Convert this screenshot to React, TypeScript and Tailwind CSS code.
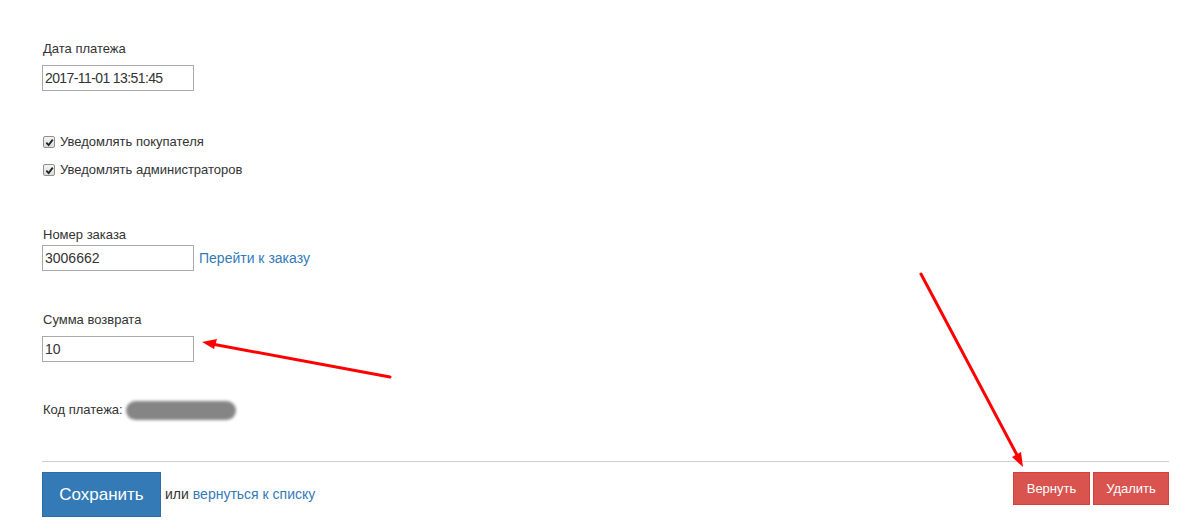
import React from "react";

const CheckMark: React.FC = () => (
  <span className="inline-flex items-center justify-center w-[12px] h-[12px] border border-[#8f8f8f] rounded-[2px] bg-gradient-to-b from-[#f4f4f4] to-[#dcdcdc]">
    <svg width="9" height="9" viewBox="0 0 10 10">
      <path d="M1.5 5.2 L4 7.8 L8.6 1.8" fill="none" stroke="#222" strokeWidth="2" />
    </svg>
  </span>
);

const Field: React.FC<{ value: string; tight?: boolean }> = ({ value, tight }) => (
  <input
    readOnly
    value={value}
    className={
      tight
        ? "block h-[26px] w-[152px] border border-[#a9a9a9] px-[2px] text-[14px] tracking-[-0.6px] text-[#333] outline-none bg-white"
        : "block h-[26px] w-[152px] border border-[#a9a9a9] px-[2px] text-[14px] text-[#333] outline-none bg-white"
    }
  />
);

export default function App() {
  return (
    <div className="relative w-[1200px] h-[532px] bg-white overflow-hidden font-['Liberation_Sans',Arial,sans-serif] text-[13px] text-[#333]">
      <div className="pt-[40px] pl-[42px] pr-[31px]">
        <div className="leading-[18px] pl-px">Дата платежа</div>
        <div className="mt-[7px]">
          <Field value="2017-11-01 13:51:45" tight />
        </div>

        <div className="mt-[41px] flex flex-col gap-[8px] pl-px">
          <label className="flex items-center gap-[5px] h-[20px]">
            <CheckMark />
            <span>Уведомлять покупателя</span>
          </label>
          <label className="flex items-center gap-[5px] h-[20px]">
            <CheckMark />
            <span>Уведомлять администраторов</span>
          </label>
        </div>

        <div className="mt-[46px] leading-[18px] pl-px">Номер заказа</div>
        <div className="mt-px flex items-center gap-[5px]">
          <Field value="3006662" />
          <a href="#" className="text-[#337ab7] text-[14px]">
            Перейти к заказу
          </a>
        </div>

        <div className="mt-[40px] leading-[18px] pl-px">Сумма возврата</div>
        <div className="mt-[7px]">
          <Field value="10" />
        </div>

        <div className="mt-[39px] leading-[18px] pl-px flex items-center h-[18px]">
          <span>Код платежа:</span>
          <span className="inline-block ml-[3px] w-[110px] h-[19px] rounded-full bg-[#858585] blur-[1.5px]" />
        </div>

        <div className="mt-[42px] border-t border-[#cfcfcf]" />

        <div className="mt-[10px] flex items-start justify-between">
          <div className="flex items-center text-[14px]">
            <button className="h-[45px] w-[119px] bg-[#337ab7] border border-[#2e6da4] text-white text-[17px]">
              Сохранить
            </button>
            <span className="ml-[4px]">или</span>
            <a href="#" className="ml-[4px] text-[#337ab7]">
              вернуться к списку
            </a>
          </div>
          <div className="flex gap-[3px]">
            <button className="h-[33px] w-[77px] bg-[#d9534f] border border-[#d43f3a] text-white text-[13px]">
              Вернуть
            </button>
            <button className="h-[33px] w-[76px] bg-[#d9534f] border border-[#d43f3a] text-white text-[13px]">
              Удалить
            </button>
          </div>
        </div>
      </div>

      <svg className="absolute inset-0 pointer-events-none" width="1200" height="532">
        <line x1="390" y1="377" x2="212" y2="344" stroke="#ff0000" strokeWidth="3" strokeLinecap="round" />
        <polygon points="202,342 217,339 214,349" fill="#ff0000" />
        <line x1="921" y1="274" x2="1017" y2="455" stroke="#ff0000" strokeWidth="3" strokeLinecap="round" />
        <polygon points="1023,467 1012,457 1021,452" fill="#ff0000" />
      </svg>
    </div>
  );
}
